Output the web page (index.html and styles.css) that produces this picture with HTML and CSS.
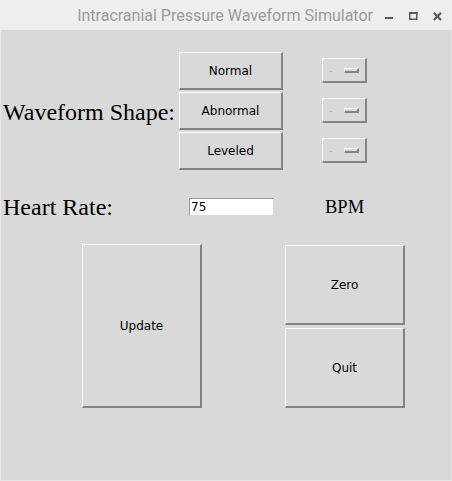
FILE: index.html
```html
<!DOCTYPE html>
<html>
<head>
<meta charset="utf-8">
<link rel="stylesheet" href="styles.css">
</head>
<body>
<div class="window">
  <div class="titlebar">
    <span class="title">Intracranial Pressure Waveform Simulator</span>
    <div class="controls">
      <svg class="ctl" width="9" height="9" viewBox="0 0 9 9"><rect x="0" y="5" width="8" height="2" fill="#595959"/></svg>
      <svg class="ctl" width="9" height="9" viewBox="0 0 9 9"><rect x="0.75" y="0.75" width="7" height="6.5" fill="none" stroke="#595959" stroke-width="1.5"/><rect x="0" y="0" width="8.5" height="2" fill="#595959"/></svg>
      <svg class="ctl" width="9" height="9" viewBox="0 0 9 9"><path d="M0.8 0.8 L8 8 M8 0.8 L0.8 8" stroke="#595959" stroke-width="2.2"/></svg>
    </div>
  </div>
  <div class="content">
    <div class="shape-grid">
      <div class="big-label shape-label">Waveform Shape:</div>
      <button class="btn shape-btn r1">Normal</button>
      <button class="btn shape-btn r2">Abnormal</button>
      <button class="btn shape-btn r3">Leveled</button>
      <div class="toggle r1"><span class="dash">-</span><span class="ind"></span></div>
      <div class="toggle r2"><span class="dash">-</span><span class="ind"></span></div>
      <div class="toggle r3"><span class="dash">-</span><span class="ind"></span></div>
    </div>
    <div class="hr-row">
      <span class="big-label hr-label">Heart Rate:</span>
      <input class="entry" type="text" value="75">
      <span class="bpm">BPM</span>
    </div>
    <div class="actions">
      <button class="btn update">Update</button>
      <button class="btn zero">Zero</button>
      <button class="btn quit">Quit</button>
    </div>
  </div>
</div>
</body>
</html>
```

FILE: styles.css
```css
html, body {
  margin: 0;
  padding: 0;
  width: 452px;
  height: 481px;
  overflow: hidden;
  background: #eeeeee;
}

.window {
  display: flex;
  flex-direction: column;
  width: 452px;
  height: 481px;
}

.titlebar {
  height: 30px;
  flex: none;
  display: flex;
  align-items: center;
  justify-content: flex-end;
  background: #eeeeee;
  padding-right: 10px;
}

.title {
  font-family: Roboto, "Noto Sans", sans-serif;
  font-size: 16px;
  color: #9a9a9a;
  margin-right: 12px;
  line-height: 30px;
  padding-top: 2px;
}

.controls {
  display: flex;
  gap: 15px;
  align-items: center;
  padding-top: 2px;
}

.ctl {
  display: block;
}

.content {
  flex: 1;
  background: #d9d9d9;
  border-left: 1px solid #e6e6e6;
  border-right: 1px solid #e6e6e6;
  border-bottom: 1px solid #e6e6e6;
  padding: 22px 0 0 2px;
  display: flex;
  flex-direction: column;
}

.big-label {
  font-family: "Liberation Serif", "Times New Roman", serif;
  font-size: 24px;
  color: #000;
  white-space: nowrap;
}

.shape-grid {
  display: grid;
  grid-template-columns: 176px 104px 39px 45px;
  grid-template-rows: 38px 38px 38px;
  row-gap: 2px;
}

.shape-label {
  grid-column: 1;
  grid-row: 1 / 4;
  align-self: center;
  margin-top: 3px;
}

.btn {
  font-family: "DejaVu Sans", sans-serif;
  font-size: 12px;
  color: #000;
  background: #d9d9d9;
  border-style: solid;
  border-width: 1px 2px 2px 1px;
  border-color: #ffffff #838383 #838383 #ffffff;
  padding: 0;
  margin: 0;
  box-sizing: border-box;
}

.shape-btn {
  grid-column: 2;
  width: 104px;
  height: 38px;
}

.r1 { grid-row: 1; }
.r2 { grid-row: 2; }
.r3 { grid-row: 3; }

.toggle {
  grid-column: 4;
  align-self: center;
  width: 45px;
  height: 25px;
  box-sizing: border-box;
  border-style: solid;
  border-width: 1px 2px 2px 1px;
  border-color: #ffffff #838383 #838383 #ffffff;
  display: flex;
  align-items: center;
  padding-left: 6px;
  margin-top: -1px;
}

.dash {
  font-family: "DejaVu Sans", sans-serif;
  font-size: 10px;
  color: #b4b4b4;
  width: 15px;
}

.ind {
  width: 15px;
  height: 5px;
  box-sizing: border-box;
  border-style: solid;
  border-width: 1px 2px 2px 1px;
  border-color: #ffffff #838383 #838383 #ffffff;
}

.hr-row {
  margin-top: 22px;
  height: 30px;
  display: flex;
  align-items: center;
}

.hr-label {
  width: 186px;
  flex: none;
}

.entry {
  width: 85px;
  height: 18px;
  box-sizing: border-box;
  border-style: solid;
  border-width: 1px;
  border-color: #9a9a9a #d9d9d9 #d9d9d9 #9a9a9a;
  background: #ffffff;
  font-family: "DejaVu Sans", sans-serif;
  font-size: 12px;
  color: #000;
  padding: 0 0 0 1px;
  margin: 0;
  outline: none;
}

.bpm {
  font-family: "Liberation Serif", "Times New Roman", serif;
  font-size: 18.5px;
  color: #000;
  margin-left: 51px;
}

.actions {
  margin-top: 22px;
  margin-left: 79px;
  display: grid;
  grid-template-columns: 120px 83px 120px;
  grid-template-rows: 81px 81px;
  row-gap: 2px;
}

.update {
  grid-column: 1;
  grid-row: 1 / 3;
  width: 120px;
  height: 164px;
}

.zero {
  grid-column: 3;
  grid-row: 1;
  align-self: end;
  width: 120px;
  height: 80px;
}

.quit {
  grid-column: 3;
  grid-row: 2;
  align-self: end;
  width: 120px;
  height: 80px;
}
```
